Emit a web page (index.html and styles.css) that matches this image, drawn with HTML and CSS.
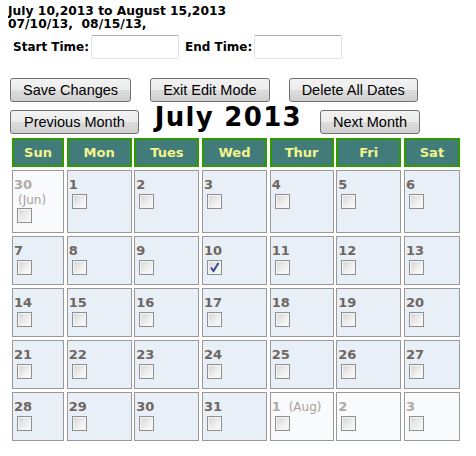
FILE: index.html
```html
<!DOCTYPE html>
<html>
<head>
  <meta charset="UTF-8">
  <title>Edit Dates</title>
  <link rel="stylesheet" href="styles.css">
</head>
<body>
  <div class="range">
    July 10,2013 to August 15,2013<br>
    07/10/13,&nbsp; 08/15/13,
  </div>

  <div class="times">
    <label for="startTime">Start Time:</label>
    <input type="text" id="startTime" class="time-input">
    <label for="endTime">End Time:</label>
    <input type="text" id="endTime" class="time-input">
  </div>

  <div class="actions">
    <button type="button" class="btn">Save Changes</button>
    <button type="button" class="btn">Exit Edit Mode</button>
    <button type="button" class="btn">Delete All Dates</button>
  </div>

  <div class="month-nav">
    <button type="button" class="btn">Previous Month</button>
    <h1 class="month-title">July 2013</h1>
    <button type="button" class="btn">Next Month</button>
  </div>

  <div class="calendar">
    <div class="dow">Sun</div>
    <div class="dow">Mon</div>
    <div class="dow">Tues</div>
    <div class="dow">Wed</div>
    <div class="dow">Thur</div>
    <div class="dow">Fri</div>
    <div class="dow">Sat</div>

    <div class="day other"><span class="num">30</span><span class="month-note block">(Jun)</span><input type="checkbox"></div>
    <div class="day"><span class="num">1</span><input type="checkbox"></div>
    <div class="day"><span class="num">2</span><input type="checkbox"></div>
    <div class="day"><span class="num">3</span><input type="checkbox"></div>
    <div class="day"><span class="num">4</span><input type="checkbox"></div>
    <div class="day"><span class="num">5</span><input type="checkbox"></div>
    <div class="day"><span class="num">6</span><input type="checkbox"></div>

    <div class="day"><span class="num">7</span><input type="checkbox"></div>
    <div class="day"><span class="num">8</span><input type="checkbox"></div>
    <div class="day"><span class="num">9</span><input type="checkbox"></div>
    <div class="day"><span class="num">10</span><input type="checkbox" checked></div>
    <div class="day"><span class="num">11</span><input type="checkbox"></div>
    <div class="day"><span class="num">12</span><input type="checkbox"></div>
    <div class="day"><span class="num">13</span><input type="checkbox"></div>

    <div class="day"><span class="num">14</span><input type="checkbox"></div>
    <div class="day"><span class="num">15</span><input type="checkbox"></div>
    <div class="day"><span class="num">16</span><input type="checkbox"></div>
    <div class="day"><span class="num">17</span><input type="checkbox"></div>
    <div class="day"><span class="num">18</span><input type="checkbox"></div>
    <div class="day"><span class="num">19</span><input type="checkbox"></div>
    <div class="day"><span class="num">20</span><input type="checkbox"></div>

    <div class="day"><span class="num">21</span><input type="checkbox"></div>
    <div class="day"><span class="num">22</span><input type="checkbox"></div>
    <div class="day"><span class="num">23</span><input type="checkbox"></div>
    <div class="day"><span class="num">24</span><input type="checkbox"></div>
    <div class="day"><span class="num">25</span><input type="checkbox"></div>
    <div class="day"><span class="num">26</span><input type="checkbox"></div>
    <div class="day"><span class="num">27</span><input type="checkbox"></div>

    <div class="day"><span class="num">28</span><input type="checkbox"></div>
    <div class="day"><span class="num">29</span><input type="checkbox"></div>
    <div class="day"><span class="num">30</span><input type="checkbox"></div>
    <div class="day"><span class="num">31</span><input type="checkbox"></div>
    <div class="day other"><span class="num">1</span><span class="month-note">(Aug)</span><input type="checkbox"></div>
    <div class="day other"><span class="num">2</span><input type="checkbox"></div>
    <div class="day other"><span class="num">3</span><input type="checkbox"></div>
  </div>
</body>
</html>
```

FILE: styles.css
```css
body {
  margin: 0 8px;
  font-family: "DejaVu Sans", Verdana, sans-serif;
  color: #000;
  background: #fff;
}
.range {
  padding-top: 5px;
  font-size: 12.3px;
  font-weight: bold;
  line-height: 13px;
}
.times {
  display: flex;
  align-items: center;
  margin-top: 4px;
  padding-left: 5px;
}
.times label {
  font-size: 12px;
  font-weight: bold;
  margin-right: 2px;
}
.time-input {
  width: 88px;
  height: 24px;
  box-sizing: border-box;
  margin-right: 6px;
  border: 1px solid #e2e3ea;
  border-top-color: #abadb3;
  border-radius: 2px;
  padding: 2px;
}
.actions {
  display: flex;
  gap: 19px;
  margin-top: 19px;
  padding-left: 2px;
}
.btn {
  height: 24px;
  padding: 0 12px;
  font-family: "Liberation Sans", Arial, sans-serif;
  font-size: 14.5px;
  color: #000;
  border: 1px solid #707070;
  border-radius: 3px;
  background: linear-gradient(#f2f2f2 0%, #ebebeb 50%, #dddddd 51%, #cfcfcf 100%);
  cursor: pointer;
}
.month-nav {
  display: flex;
  align-items: flex-start;
  height: 24px;
  margin-top: 8px;
  padding-left: 2px;
}
.month-nav .btn:first-child {
  padding: 0 13px;
}
.month-title {
  margin: -6px 18px 0 16px;
  font-size: 26px;
  letter-spacing: 1.3px;
  line-height: 26px;
}
.calendar {
  display: grid;
  grid-template-columns: 52px 65px 65px 65px 64px 65px 56px;
  column-gap: 2.67px;
  row-gap: 3px;
  margin: 4px 0 0 4px;
}
.dow {
  height: 29px;
  box-sizing: border-box;
  border: 2px solid #339900;
  background: #417c7a;
  color: #f4f48c;
  font-size: 13px;
  font-weight: bold;
  display: flex;
  align-items: center;
  justify-content: center;
}
.day {
  border: 1px solid #999;
  background: #e9eff7;
  padding: 6px 1px 9px;
  font-size: 13px;
  line-height: 16px;
}
.day.other {
  background: #f8fafc;
}
.num {
  font-weight: bold;
  color: #6e6660;
}
.other .num {
  color: #b0aaa6;
}
.month-note {
  font-size: 12px;
  color: #a8a29e;
  margin-left: 8px;
}
.month-note.block {
  display: block;
  margin-left: 4px;
  line-height: 14px;
}
.day input {
  appearance: none;
  -webkit-appearance: none;
  display: block;
  width: 15px;
  height: 15px;
  margin: 1px 0 0 3px;
  border: 1px solid #8e8f8f;
  border-radius: 0;
  background: linear-gradient(135deg, #d4d4d4 0%, #f0f0f0 60%, #fbfbfb 100%);
  box-shadow: inset 0 0 0 1px #f6f6f6;
}
.day input:checked {
  background:
    url("data:image/svg+xml,%3Csvg xmlns='http://www.w3.org/2000/svg' width='13' height='13'%3E%3Cpath d='M3 6.5 L5.5 10 L10.5 2' fill='none' stroke='%23344a9a' stroke-width='2'/%3E%3C/svg%3E") center no-repeat,
    linear-gradient(135deg, #d4d4d4 0%, #f0f0f0 60%, #fbfbfb 100%);
}
```
